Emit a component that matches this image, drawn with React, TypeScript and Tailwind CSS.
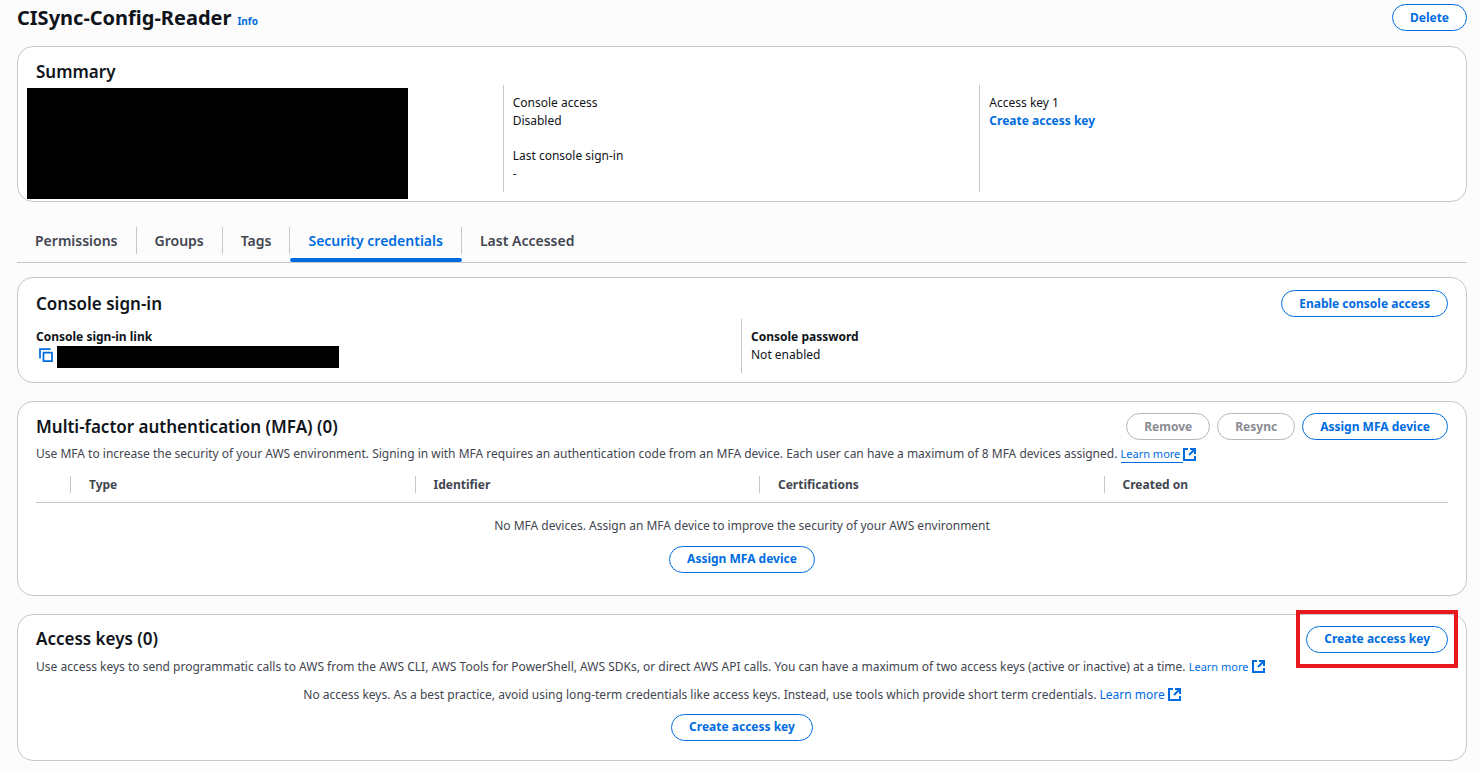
import React from "react";
import clsx from "clsx";

type ButtonProps = {
    children: React.ReactNode;
    disabled?: boolean;
};

const Button = ({ children, disabled }: ButtonProps) => {
    return (
        <button
            type="button"
            disabled={disabled}
            className={clsx(
                "h-[27px] px-[17px] rounded-full border bg-white text-[12px] leading-4 font-bold whitespace-nowrap",
                disabled
                    ? "border-[#b4b4bb] text-[#8c8c94]"
                    : "border-[#006ce0] text-[#006ce0]"
            )}
        >
            {children}
        </button>
    );
};

const ExternalIcon = () => (
    <svg
        viewBox="0 0 13 13"
        className="inline-block size-[13px] shrink-0"
        fill="none"
        stroke="currentColor"
        strokeWidth="2"
        aria-hidden="true"
    >
        <path d="M5 1H1v11h11V8" />
        <path d="M7 1h5v5M12 1 6 7" />
    </svg>
);

const CopyIcon = () => (
    <svg
        viewBox="0 0 14 14"
        className="size-[14px]"
        fill="none"
        stroke="currentColor"
        strokeWidth="1.75"
        aria-hidden="true"
    >
        <path d="M1 10.5V1h10.5" />
        <path d="M4.5 4.5H13V13H4.5z" />
    </svg>
);

type LearnMoreProps = {
    className?: string;
    underline?: boolean;
};

const LearnMore = ({ className, underline }: LearnMoreProps) => (
    <a
        href="#learn-more"
        className={clsx("inline-flex items-center text-[#006ce0]", className)}
    >
        <span
            className={clsx("pr-[3px]", underline && "border-b border-[#006ce0]")}
        >
            Learn more
        </span>
        <ExternalIcon />
    </a>
);

const Card = ({ children }: { children: React.ReactNode }) => (
    <section className="rounded-2xl border border-[#c6c6cd] bg-white">
        {children}
    </section>
);

const Heading = ({ children }: { children: React.ReactNode }) => (
    <h2 className="text-[17px] leading-6 font-semibold text-[#0f141a]">
        {children}
    </h2>
);

const tabs = [
    "Permissions",
    "Groups",
    "Tags",
    "Security credentials",
    "Last Accessed",
];

const columns = ["Type", "Identifier", "Certifications", "Created on"];

const App = () => {
    return (
        <main className="min-h-screen bg-[#fcfcfd] pt-1 pb-3 pl-[17px] pr-[13px] font-['Noto_Sans',sans-serif] text-[12px] leading-[18px] text-[#0f141a]">
            {/* Page header */}
            <header className="mb-[15px] flex h-[27px] items-center justify-between">
                <div className="flex items-baseline gap-[6px]">
                    <h1 className="text-[20px] leading-6 font-bold">
                        CISync-Config-Reader
                    </h1>
                    <a
                        href="#info"
                        className="text-[10px] font-bold text-[#006ce0]"
                    >
                        Info
                    </a>
                </div>
                <Button>Delete</Button>
            </header>

            {/* Summary */}
            <Card>
                <div className="px-[18px] pt-[13px]">
                    <Heading>Summary</Heading>
                </div>
                <div className="mt-px mr-[10px] ml-2 grid grid-cols-3 pb-[9px]">
                    <div className="relative">
                        <div className="absolute top-[3px] left-px h-[111px] w-[381px] bg-black" />
                    </div>
                    <div className="flex flex-col gap-[17px] border-l border-[#c6c6cd] py-[9px] pl-[9px]">
                        <div>
                            <p>Console access</p>
                            <p>Disabled</p>
                        </div>
                        <div>
                            <p>Last console sign-in</p>
                            <p>-</p>
                        </div>
                    </div>
                    <div className="border-l border-[#c6c6cd] py-[9px] pl-[9px]">
                        <p>Access key 1</p>
                        <a
                            href="#create"
                            className="block font-bold text-[#006ce0]"
                        >
                            Create access key
                        </a>
                    </div>
                </div>
            </Card>

            {/* Tabs */}
            <div
                role="tablist"
                className="mt-[18px] mb-[14px] flex border-b border-[#c6c6cd]"
            >
                {tabs.map((tab, i) => {
                    const active = tab === "Security credentials";

                    return (
                        <button
                            key={tab}
                            type="button"
                            role="tab"
                            aria-selected={active}
                            className={clsx(
                                "flex flex-col pt-[7px] text-[14px] font-semibold",
                                active ? "text-[#006ce0]" : "text-[#424650]"
                            )}
                        >
                            <span
                                className={clsx(
                                    "mb-1 flex h-[27px] items-center px-[18px]",
                                    i < tabs.length - 1 &&
                                        "border-r border-[#c6c6cd]"
                                )}
                            >
                                {tab}
                            </span>
                            <span
                                className={clsx(
                                    "h-1 w-full rounded-xs",
                                    active && "bg-[#006ce0]"
                                )}
                            />
                        </button>
                    );
                })}
            </div>

            <div className="flex flex-col gap-[18px]">
                {/* Console sign-in */}
                <Card>
                    <div className="flex items-center justify-between px-[18px] pt-3">
                        <Heading>Console sign-in</Heading>
                        <Button>Enable console access</Button>
                    </div>
                    <div className="mt-0.5 mr-[10px] mb-[9px] ml-2 grid grid-cols-2">
                        <div className="py-[9px] pl-[10px]">
                            <p className="font-bold">Console sign-in link</p>
                            <div className="flex h-[18px] items-start gap-1 pl-[3px]">
                                <button
                                    type="button"
                                    aria-label="Copy sign-in link"
                                    className="pt-0.5 text-[#006ce0]"
                                >
                                    <CopyIcon />
                                </button>
                                <div className="h-[22px] w-[282px] bg-black" />
                            </div>
                        </div>
                        <div className="border-l border-[#c6c6cd] py-[9px] pl-[9px]">
                            <p className="font-bold">Console password</p>
                            <p>Not enabled</p>
                        </div>
                    </div>
                </Card>

                {/* MFA */}
                <Card>
                    <div className="px-[18px] pt-[11px] pb-[22px]">
                        <div className="flex items-center justify-between">
                            <Heading>
                                Multi-factor authentication (MFA) (0)
                            </Heading>
                            <div className="flex gap-[7px]">
                                <Button disabled>Remove</Button>
                                <Button disabled>Resync</Button>
                                <Button>Assign MFA device</Button>
                            </div>
                        </div>
                        <p className="mt-[5px] text-[#424650]">
                            Use MFA to increase the security of your AWS
                            environment. Signing in with MFA requires an
                            authentication code from an MFA device. Each user
                            can have a maximum of 8 MFA devices assigned.{" "}
                            <LearnMore
                                underline
                                className="text-[11px] leading-4"
                            />
                        </p>
                        <table className="mt-[5px] w-full table-fixed text-[#424650]">
                            <thead>
                                <tr className="h-[34px] border-b border-[#c6c6cd]">
                                    <th className="w-[34px]" />
                                    {columns.map((column) => (
                                        <th
                                            key={column}
                                            scope="col"
                                            className="p-0 text-left font-bold"
                                        >
                                            <div className="h-[17px] border-l border-[#c6c6cd] pl-[18px]">
                                                {column}
                                            </div>
                                        </th>
                                    ))}
                                </tr>
                            </thead>
                            <tbody>
                                <tr>
                                    <td
                                        colSpan={5}
                                        className="pt-[14px] text-center"
                                    >
                                        <p className="mb-[11px]">
                                            No MFA devices. Assign an MFA device
                                            to improve the security of your AWS
                                            environment
                                        </p>
                                        <div className="flex justify-center">
                                            <Button>Assign MFA device</Button>
                                        </div>
                                    </td>
                                </tr>
                            </tbody>
                        </table>
                    </div>
                </Card>

                {/* Access keys */}
                <Card>
                    <div className="px-[18px] pt-[11px] pb-[19px] text-[#424650]">
                        <div className="flex items-center justify-between">
                            <Heading>Access keys (0)</Heading>
                            <div className="relative flex">
                                <Button>Create access key</Button>
                                <div className="pointer-events-none absolute -inset-x-[10px] -top-4 -bottom-[15px] border-4 border-[#e8191c]" />
                            </div>
                        </div>
                        <p className="mt-[5px]">
                            Use access keys to send programmatic calls to AWS
                            from the AWS CLI, AWS Tools for PowerShell, AWS
                            SDKs, or direct AWS API calls. You can have a
                            maximum of two access keys (active or inactive) at a
                            time. <LearnMore className="text-[11px] leading-4" />
                        </p>
                        <p className="mt-[10px] mb-[10px] text-center">
                            No access keys. As a best practice, avoid using
                            long-term credentials like access keys. Instead, use
                            tools which provide short term credentials.{" "}
                            <LearnMore className="leading-4" />
                        </p>
                        <div className="flex justify-center">
                            <Button>Create access key</Button>
                        </div>
                    </div>
                </Card>
            </div>
        </main>
    );
};

export default App;
